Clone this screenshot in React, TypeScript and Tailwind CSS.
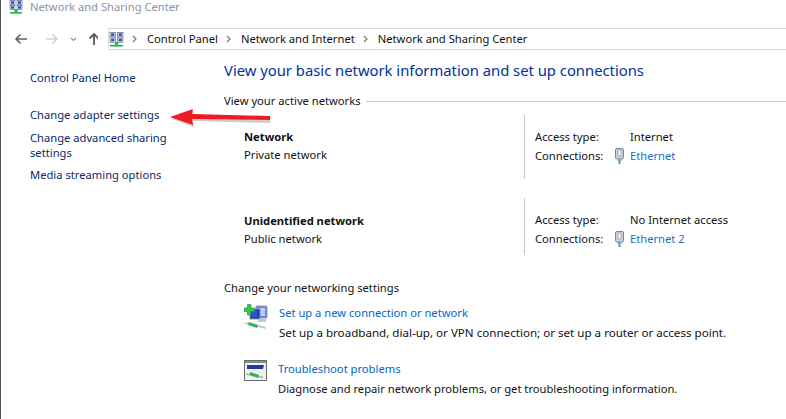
const font = '[font-family:"Noto_Sans","Open_Sans",sans-serif]';

function NetIcon({ size = 14 }: { size?: number }) {
  return (
    <svg width={size} height={size} viewBox="0 0 14 14" className="shrink-0">
      <rect x="1" y="0.5" width="5" height="4" fill="#fff" stroke="#5d6b8a" strokeWidth="0.7" />
      <rect x="2" y="1.2" width="3" height="2.5" fill="#2a52be" />
      <rect x="8" y="0.5" width="5" height="4" fill="#fff" stroke="#5d6b8a" strokeWidth="0.7" />
      <rect x="9" y="1.2" width="3" height="2.5" fill="#2a52be" />
      <rect x="1" y="5.5" width="5" height="4" fill="#fff" stroke="#5d6b8a" strokeWidth="0.7" />
      <rect x="2" y="6.2" width="3" height="2.5" fill="#2a52be" />
      <rect x="8" y="5.5" width="5" height="4" fill="#fff" stroke="#5d6b8a" strokeWidth="0.7" />
      <rect x="9" y="6.2" width="3" height="2.5" fill="#2a52be" />
      <rect x="5.5" y="9.5" width="3" height="2.5" fill="#22b14c" />
      <rect x="1" y="12" width="12" height="1.6" fill="#22b14c" />
    </svg>
  );
}

function PlugIcon() {
  return (
    <svg width="9" height="16" viewBox="0 0 9 16" className="shrink-0">
      <rect x="0.5" y="0.5" width="8" height="10.5" rx="1.5" fill="#c9d2dc" stroke="#7c8794" />
      <rect x="3" y="2" width="3" height="6" fill="#f4f6f8" stroke="#8a94a0" strokeWidth="0.6" />
      <rect x="2.5" y="11" width="4" height="2" fill="#8fa3b5" />
      <rect x="3.5" y="13" width="2" height="3" fill="#2f9fd8" />
    </svg>
  );
}

function SetupIcon() {
  return (
    <svg width="24" height="26" viewBox="0 0 24 26" className="shrink-0">
      <rect x="12" y="2" width="11" height="12" rx="1" fill="#5f86e8" stroke="#8f9dbb" />
      <rect x="15" y="4" width="6" height="8" fill="#b9cdf8" />
      <rect x="6" y="5" width="10" height="10" fill="#1f3fae" stroke="#8a93a8" />
      <rect x="8" y="7" width="5" height="6" fill="#2a58d0" />
      <rect x="14" y="15" width="8" height="3" fill="#c3c8d2" />
      <path d="M3.5 0.5h3.5v3.5h3.5v3.5H7V11H3.5V7.5H0V4h3.5z" fill="#3cc04e" stroke="#2c8a38" strokeWidth="0.6" />
      <path d="M1 19l21 5" stroke="#c4c9d0" strokeWidth="2" />
      <path d="M5 18l9 3-1 3-9-3z" fill="#2fb457" />
    </svg>
  );
}

function TroubleIcon() {
  return (
    <svg width="23" height="22" viewBox="0 0 23 22" className="shrink-0">
      <rect x="0.5" y="0.5" width="22" height="20" fill="#f1f1f1" stroke="#6b6b6b" />
      <rect x="1" y="1" width="21" height="2" fill="#8c8c8c" />
      <path d="M3 5h17l-1 4H3z" fill="#1f3aa6" />
      <path d="M2 14l17 3.5" stroke="#b4b9c0" strokeWidth="2" />
      <path d="M6 12l9 3-1 3-8-3z" fill="#27b35a" />
    </svg>
  );
}

function Chevron() {
  return (
    <svg width="6" height="8" viewBox="0 0 6 8" className="ml-[8px] mr-[9px] shrink-0">
      <path d="M1 1l3 3-3 3" fill="none" stroke="#777" strokeWidth="1.2" />
    </svg>
  );
}

function NetworkRow({ name, kind, access, conn, h, nameTop }: { name: string; kind: string; access: string; conn: string; h: string; nameTop: string }) {
  return (
    <div className={`flex ${h}`}>
      <div className={`w-[300px] pl-[20px] ${nameTop}`}>
        <div className="font-bold leading-[18px] text-[#111]">{name}</div>
        <div className="leading-[18px] text-[#111]">{kind}</div>
      </div>
      <div className="border-l border-[#c8c8c8] pl-[10px] pt-[13px] grow">
        <div className="flex leading-[18px] text-[#111]">
          <span className="w-[95px]">Access type:</span>
          <span>{access}</span>
        </div>
        <div className="flex leading-[18px] mt-px text-[#111]">
          <span className="w-[80px]">Connections:</span>
          <span className="w-[15px] flex items-center"><PlugIcon /></span>
          <span className="text-[#1a6fc9]">{conn}</span>
        </div>
      </div>
    </div>
  );
}

export default function App() {
  return (
    <div className={`${font} relative w-[786px] h-[419px] overflow-hidden bg-white text-[11.2px] text-[#111]`}>
      <div className="absolute left-0 top-0 bottom-0 w-px bg-[#55585c]" />

      {/* Title */}
      <div className="flex items-center h-[14px] pl-[9px] gap-[7px]">
        <NetIcon />
        <span className="text-[#8b95a1] leading-[14px]">Network and Sharing Center</span>
      </div>

      {/* Nav */}
      <div className="flex items-center h-[22px] mt-[14px] pl-[14px]">
        <svg width="84" height="16" viewBox="0 0 84 16" className="shrink-0 mr-[10px]">
          <path d="M13 8H2M6.5 3.5L2 8l4.5 4.5" fill="none" stroke="#5f6368" strokeWidth="1.6" />
          <path d="M32 8h11M38.5 3.5L43 8l-4.5 4.5" fill="none" stroke="#cfd2d6" strokeWidth="1.6" />
          <path d="M57 7l2.5 2.5L62 7" fill="none" stroke="#8b8f94" strokeWidth="1.2" />
          <path d="M80 14V3M75.5 7.5L80 3l4.5 4.5" fill="none" stroke="#55595e" strokeWidth="1.8" />
        </svg>
        <div className="flex items-center h-[22px] grow border border-[#d9d9d9] border-r-0">
          <NetIcon size={15} />
          <Chevron />
          <span>Control Panel</span>
          <Chevron />
          <span>Network and Internet</span>
          <Chevron />
          <span>Network and Sharing Center</span>
        </div>
      </div>

      <div className="flex">
        {/* Sidebar */}
        <div className="w-[224px] shrink-0 pl-[30px] pr-[40px] pt-[19px] text-[#0a2a6b]">
          <div className="leading-[18px]">Control Panel Home</div>
          <div className="leading-[18px] mt-[19px]">Change adapter settings</div>
          <div className="leading-[15px] mt-[6px]">Change advanced sharing settings</div>
          <div className="leading-[18px] mt-[6px]">Media streaming options</div>
        </div>

        {/* Main */}
        <div className="grow">
          <div className="text-[14.8px] leading-[22px] text-[#003399] mt-[9px]">View your basic network information and set up connections</div>
          <div className="flex items-center mt-[11px] gap-[5px]">
            <span className="leading-[18px] whitespace-nowrap">View your active networks</span>
            <div className="h-px grow bg-[#c8c8c8]" />
          </div>
          <div className="mt-[5px]">
            <NetworkRow h="h-[64px]" nameTop="pt-[13px]" name="Network" kind="Private network" access="Internet" conn="Ethernet" />
            <div className="h-[19px]" />
            <NetworkRow h="h-[57px]" nameTop="pt-[14px]" name="Unidentified network" kind="Public network" access="No Internet access" conn="Ethernet 2" />
          </div>
          <div className="leading-[18px] mt-[24px]">Change your networking settings</div>
          <div className="flex gap-[11px] pl-[20px] mt-[7px]">
            <SetupIcon />
            <div>
              <div className="leading-[18px] text-[#0066cc]">Set up a new connection or network</div>
              <div className="leading-[18px] mt-[2px] text-[11.6px]">Set up a broadband, dial-up, or VPN connection; or set up a router or access point.</div>
            </div>
          </div>
          <div className="flex gap-[11px] pl-[20px] mt-[18px]">
            <TroubleIcon />
            <div>
              <div className="leading-[18px] text-[#0066cc]">Troubleshoot problems</div>
              <div className="leading-[18px] mt-[2px]">Diagnose and repair network problems, or get troubleshooting information.</div>
            </div>
          </div>
        </div>
      </div>

      {/* Red annotation arrow */}
      <svg width="106" height="22" viewBox="0 0 106 22" className="absolute left-[168px] top-[106px]">
        <path d="M4 13L26 5l-1 5 77 4v3l-77-2 1 6z" fill="#9a9a9a" opacity="0.5" />
        <path d="M2 11L25 3l-1 5 78 2v4l-78-1 1 6z" fill="#ed1c24" />
      </svg>
    </div>
  );
}
